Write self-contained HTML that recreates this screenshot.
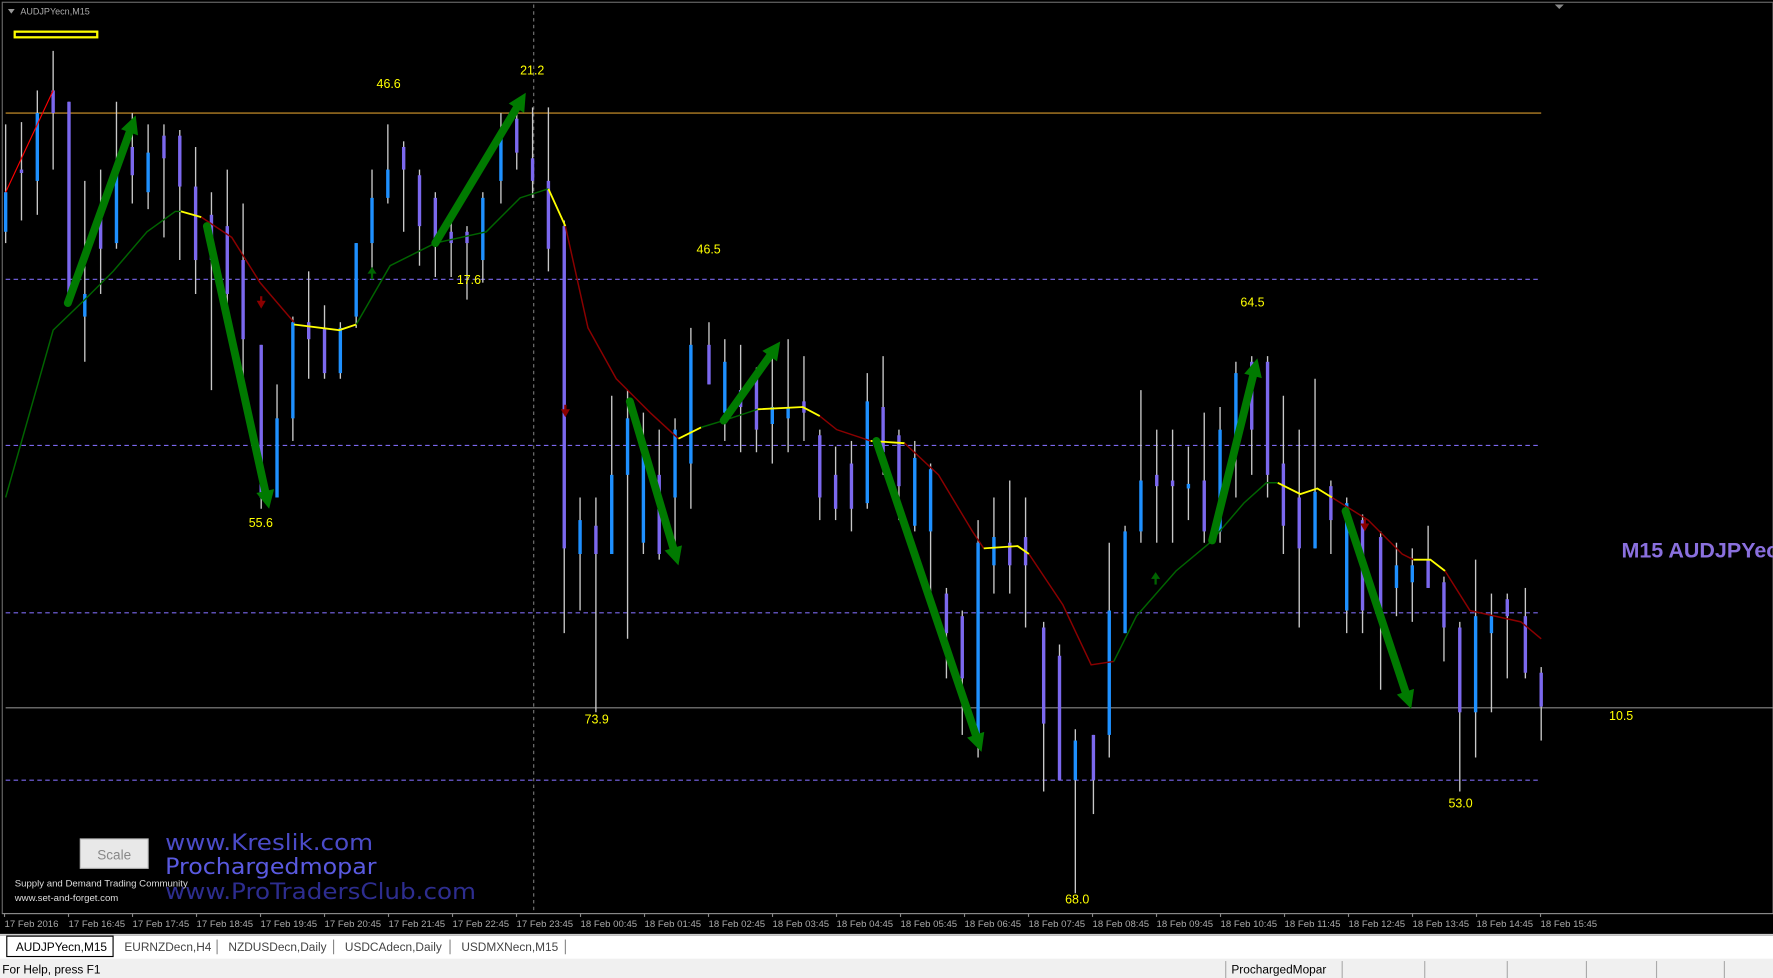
<!DOCTYPE html>
<html><head><meta charset="utf-8"><style>
html,body{margin:0;padding:0;background:#f0f0f0;overflow:hidden}
svg{display:block}
</style></head><body>
<svg id="s" width="1773" height="978" viewBox="0 0 1568 865" preserveAspectRatio="none" xmlns="http://www.w3.org/2000/svg" font-family="Liberation Sans, sans-serif">
<rect x="0" y="0" width="1568" height="828" fill="#000"/>
<rect x="2" y="2" width="1566" height="806" fill="none" stroke="#6a6a6a" stroke-width="1"/>
<line x1="2" y1="808" x2="1568" y2="808" stroke="#888"/>
<polygon points="1375,4 1383,4 1379,8" fill="#888"/>
<polygon points="7,8 13,8 10,12" fill="#999"/>
<text x="18" y="13" font-size="8" fill="#aaa">AUDJPYecn,M15</text>
<rect x="13" y="28" width="73" height="5" fill="none" stroke="#ff0" stroke-width="2"/>
<line x1="5" y1="100" x2="1363" y2="100" stroke="#d89a2c" stroke-width="1"/>
<g stroke="#7b68ee" stroke-dasharray="4,3" stroke-width="1">
<line x1="5" y1="247" x2="1363" y2="247"/><line x1="5" y1="394" x2="1363" y2="394"/>
<line x1="5" y1="542" x2="1363" y2="542"/><line x1="5" y1="690" x2="1363" y2="690"/></g>
<line x1="5" y1="626" x2="1568" y2="626" stroke="#888"/>
<line x1="472" y1="4" x2="472" y2="808" stroke="#777" stroke-dasharray="3,3"/>
<g id="candles"></g>
<g fill="none" stroke-width="1.3">
<polyline stroke="#f00" stroke-width="1" points="5,170 47,80"/>
<polyline stroke="#006400" points="5,440 47,292 75,265 100,240 130,205 155,187 162,187"/>
<polyline stroke="#ff0" stroke-width="1.6" points="160,187 178,192"/>
<polyline stroke="#8b0000" points="178,192 205,210 230,250 260,285"/>
<polyline stroke="#ff0" stroke-width="1.6" points="260,287 300,292 315,287"/>
<polyline stroke="#006400" points="315,287 345,235 385,215 430,205 460,175 485,167"/>
<polyline stroke="#ff0" stroke-width="1.6" points="485,167 500,200"/>
<polyline stroke="#8b0000" points="500,200 520,290 545,335 575,365 600,388"/>
<polyline stroke="#ff0" stroke-width="1.6" points="600,388 620,378"/>
<polyline stroke="#006400" points="620,378 640,372 670,362"/>
<polyline stroke="#ff0" stroke-width="1.6" points="670,362 710,360 725,368"/>
<polyline stroke="#8b0000" points="725,368 740,380 770,390"/>
<polyline stroke="#ff0" stroke-width="1.6" points="770,390 800,392"/>
<polyline stroke="#8b0000" points="800,392 830,420 860,470 870,485"/>
<polyline stroke="#ff0" stroke-width="1.6" points="870,485 900,483 910,490"/>
<polyline stroke="#8b0000" points="910,490 940,535 965,588 985,585"/>
<polyline stroke="#006400" points="985,585 1005,545 1040,505 1070,480 1100,445 1120,427 1130,427"/>
<polyline stroke="#ff0" stroke-width="1.6" points="1130,427 1150,437 1165,432 1178,440"/>
<polyline stroke="#8b0000" points="1178,440 1210,460 1240,490 1250,495"/>
<polyline stroke="#ff0" stroke-width="1.6" points="1250,495 1265,495 1278,505"/>
<polyline stroke="#8b0000" points="1278,505 1300,540 1345,550 1363,565"/>
</g>
<g id="arrows"></g>
<g fill="#8b0000"><polygon points="227,266 235,266 231,273"/><rect x="230" y="262" width="2" height="6"/>
<polygon points="496,362 504,362 500,369"/><rect x="499" y="358" width="2" height="6"/>
<polygon points="1203,463 1211,463 1207,470"/><rect x="1206" y="459" width="2" height="6"/></g>
<g fill="#006400"><polygon points="325,242 333,242 329,236"/><rect x="328" y="241" width="2" height="6"/>
<polygon points="1018,512 1026,512 1022,506"/><rect x="1021" y="511" width="2" height="6"/></g>
<g font-size="11" fill="#ff0">
<text x="333" y="78">46.6</text><text x="460" y="66">21.2</text><text x="404" y="251">17.6</text>
<text x="220" y="466">55.6</text><text x="616" y="224">46.5</text><text x="517" y="640">73.9</text>
<text x="1097" y="271">64.5</text><text x="942" y="799">68.0</text><text x="1281" y="714">53.0</text>
<text x="1423" y="637">10.5</text></g>
<text x="1434" y="493" font-size="19" font-weight="bold" fill="#8a70de">M15 AUDJPYecn</text>
<rect x="71" y="742" width="60" height="26" fill="#e8e8e8" stroke="#bbb"/>
<text x="86" y="760" font-size="12" fill="#888">Scale</text>
<g font-size="20" font-family="DejaVu Sans, sans-serif"><text x="146" y="752" fill="#4b4bc8" textLength="184" lengthAdjust="spacingAndGlyphs">www.Kreslik.com</text>
<text x="146" y="773" fill="#5a5ae0" textLength="187" lengthAdjust="spacingAndGlyphs">Prochargedmopar</text>
<text x="146" y="795" fill="#2d2d8f" textLength="275" lengthAdjust="spacingAndGlyphs">www.ProTradersClub.com</text></g>
<text x="13" y="784" font-size="8.5" fill="#ddd">Supply and Demand Trading Community</text>
<text x="13" y="797" font-size="8.5" fill="#ddd">www.set-and-forget.com</text>
<g id="axis" font-size="8.5" fill="#aaa"></g>
<rect x="0" y="826" width="1568" height="22" fill="#fff"/>
<line x1="0" y1="827" x2="1568" y2="827" stroke="#999"/>
<rect x="6" y="828" width="94" height="18" fill="#fff" stroke="#000"/>
<g font-size="10.5" fill="#444"><text x="14" y="841" fill="#000">AUDJPYecn,M15</text>
<text x="110" y="841">EURNZDecn,H4</text><text x="202" y="841">NZDUSDecn,Daily</text>
<text x="305" y="841">USDCAdecn,Daily</text><text x="408" y="841">USDMXNecn,M15</text></g>
<g stroke="#888"><line x1="192" y1="831" x2="192" y2="844"/><line x1="295" y1="831" x2="295" y2="844"/><line x1="398" y1="831" x2="398" y2="844"/><line x1="500" y1="831" x2="500" y2="844"/></g>
<rect x="0" y="848" width="1568" height="17" fill="#f0f0f0"/>
<text x="2" y="861" font-size="10.5" fill="#000">For Help, press F1</text>
<text x="1089" y="861" font-size="10.5" fill="#000">ProchargedMopar</text>
<g stroke="#aaa"><line x1="1084" y1="850" x2="1084" y2="865"/><line x1="1187" y1="850" x2="1187" y2="865"/><line x1="1260" y1="850" x2="1260" y2="865"/><line x1="1333" y1="850" x2="1333" y2="865"/><line x1="1403" y1="850" x2="1403" y2="865"/><line x1="1465" y1="850" x2="1465" y2="865"/><line x1="1525" y1="850" x2="1525" y2="865"/></g>
</svg>
<script>
var NS="http://www.w3.org/2000/svg";
function el(p,t,a){var e=document.createElementNS(NS,t);for(var k in a)e.setAttribute(k,a[k]);p.appendChild(e);return e;}
var C=[[5,110,215,170,205,"b"],[19,108,195,150,153,"p"],[33,80,190,100,160,"b"],[47,45,150,80,100,"p"],[61,90,270,90,270,"p"],[75,160,320,260,280,"b"],[89,150,260,185,220,"p"],[103,90,220,150,215,"b"],[117,100,180,130,155,"p"],[131,110,185,135,170,"b"],[145,110,210,120,140,"p"],[159,115,230,120,165,"p"],[173,130,260,165,230,"p"],[187,170,345,190,230,"p"],[201,150,290,200,260,"p"],[215,180,340,230,300,"p"],[231,305,450,305,440,"p"],[245,340,440,370,440,"b"],[259,280,390,285,370,"b"],[273,240,335,285,300,"p"],[287,270,335,290,330,"p"],[301,285,335,290,330,"b"],[315,215,290,215,280,"b"],[329,150,245,175,215,"b"],[343,110,180,150,175,"b"],[357,125,205,130,150,"p"],[371,150,235,155,200,"p"],[385,170,245,175,215,"p"],[399,195,245,205,215,"p"],[413,200,265,205,215,"p"],[427,170,250,175,230,"b"],[443,100,180,120,160,"b"],[457,95,150,105,135,"p"],[471,95,175,140,160,"p"],[485,95,240,160,220,"p"],[499,195,560,200,485,"p"],[513,440,540,460,490,"b"],[527,440,630,465,490,"p"],[541,350,490,420,490,"b"],[555,345,565,370,420,"b"],[569,365,490,400,480,"b"],[583,380,495,420,490,"p"],[597,370,480,380,440,"b"],[611,290,450,305,410,"b"],[627,285,340,305,340,"p"],[641,300,390,320,365,"b"],[655,305,400,345,360,"p"],[669,325,400,330,380,"p"],[683,310,410,360,375,"b"],[697,300,400,360,370,"b"],[711,315,390,355,365,"p"],[725,380,460,385,440,"p"],[739,395,460,420,450,"p"],[753,390,470,410,450,"p"],[767,330,450,355,445,"b"],[781,315,420,360,400,"p"],[795,380,460,385,430,"p"],[809,390,470,405,465,"b"],[823,410,540,415,470,"b"],[837,520,600,525,560,"p"],[851,540,650,545,600,"p"],[865,460,670,480,660,"b"],[879,440,525,475,500,"b"],[893,425,525,480,500,"p"],[907,440,555,475,500,"p"],[923,550,700,555,640,"p"],[937,570,690,580,690,"p"],[951,645,790,655,690,"b"],[967,650,720,650,690,"p"],[981,480,670,540,650,"b"],[995,465,560,470,560,"b"],[1009,345,480,425,470,"b"],[1023,380,480,420,430,"p"],[1037,380,480,425,430,"p"],[1051,395,460,428,432,"b"],[1065,365,480,425,470,"p"],[1079,360,480,380,470,"b"],[1093,320,440,330,390,"b"],[1107,315,420,320,380,"p"],[1121,315,440,320,420,"p"],[1135,350,490,410,465,"p"],[1149,380,555,440,485,"p"],[1163,335,485,435,485,"b"],[1177,425,490,430,460,"p"],[1191,440,560,445,540,"b"],[1205,455,560,460,540,"p"],[1221,470,610,475,545,"p"],[1235,480,545,500,520,"b"],[1249,485,550,500,515,"b"],[1263,465,520,495,520,"p"],[1277,510,585,515,555,"p"],[1291,550,700,555,630,"p"],[1305,495,670,545,630,"b"],[1319,525,630,545,560,"b"],[1333,525,600,530,545,"p"],[1349,520,600,545,595,"p"],[1363,590,655,595,625,"p"]];
var g=document.getElementById("candles");
C.forEach(function(c){el(g,"line",{x1:c[0],y1:c[1],x2:c[0],y2:c[2],stroke:"#c8c8c8","stroke-width":1.2});
el(g,"rect",{x:c[0]-1.5,y:c[3],width:3,height:Math.max(2,c[4]-c[3]),fill:c[5]=="b"?"#1e90ff":"#7b68ee"});});
var A=[[60,268,120,102],[183,200,238,450],[385,215,465,82],[557,355,600,500],[640,372,690,302],[775,390,868,665],[1072,478,1112,317],[1190,452,1248,627]];
var ag=document.getElementById("arrows");
A.forEach(function(a){var dx=a[2]-a[0],dy=a[3]-a[1],L=Math.sqrt(dx*dx+dy*dy),ux=dx/L,uy=dy/L,nx=-uy,ny=ux;
var bx=a[2]-ux*16,by=a[3]-uy*16;
el(ag,"line",{x1:a[0],y1:a[1],x2:bx,y2:by,stroke:"#007a00","stroke-width":7,"stroke-linecap":"round"});
el(ag,"polygon",{points:a[2]+","+a[3]+" "+(bx+nx*8)+","+(by+ny*8)+" "+(bx-nx*8)+","+(by-ny*8),fill:"#007a00"});});
var ax=document.getElementById("axis");
var labs=["17 Feb 2016","17 Feb 16:45","17 Feb 17:45","17 Feb 18:45","17 Feb 19:45","17 Feb 20:45","17 Feb 21:45","17 Feb 22:45","17 Feb 23:45","18 Feb 00:45","18 Feb 01:45","18 Feb 02:45","18 Feb 03:45","18 Feb 04:45","18 Feb 05:45","18 Feb 06:45","18 Feb 07:45","18 Feb 08:45","18 Feb 09:45","18 Feb 10:45","18 Feb 11:45","18 Feb 12:45","18 Feb 13:45","18 Feb 14:45","18 Feb 15:45"];
labs.forEach(function(t,i){var x=i==0?4:4+i*56.6;var e=el(ax,"text",{x:x,y:820});e.textContent=t;
el(ax,"line",{x1:x,y1:808,x2:x,y2:811,stroke:"#888"});});
</script>
</body></html>
